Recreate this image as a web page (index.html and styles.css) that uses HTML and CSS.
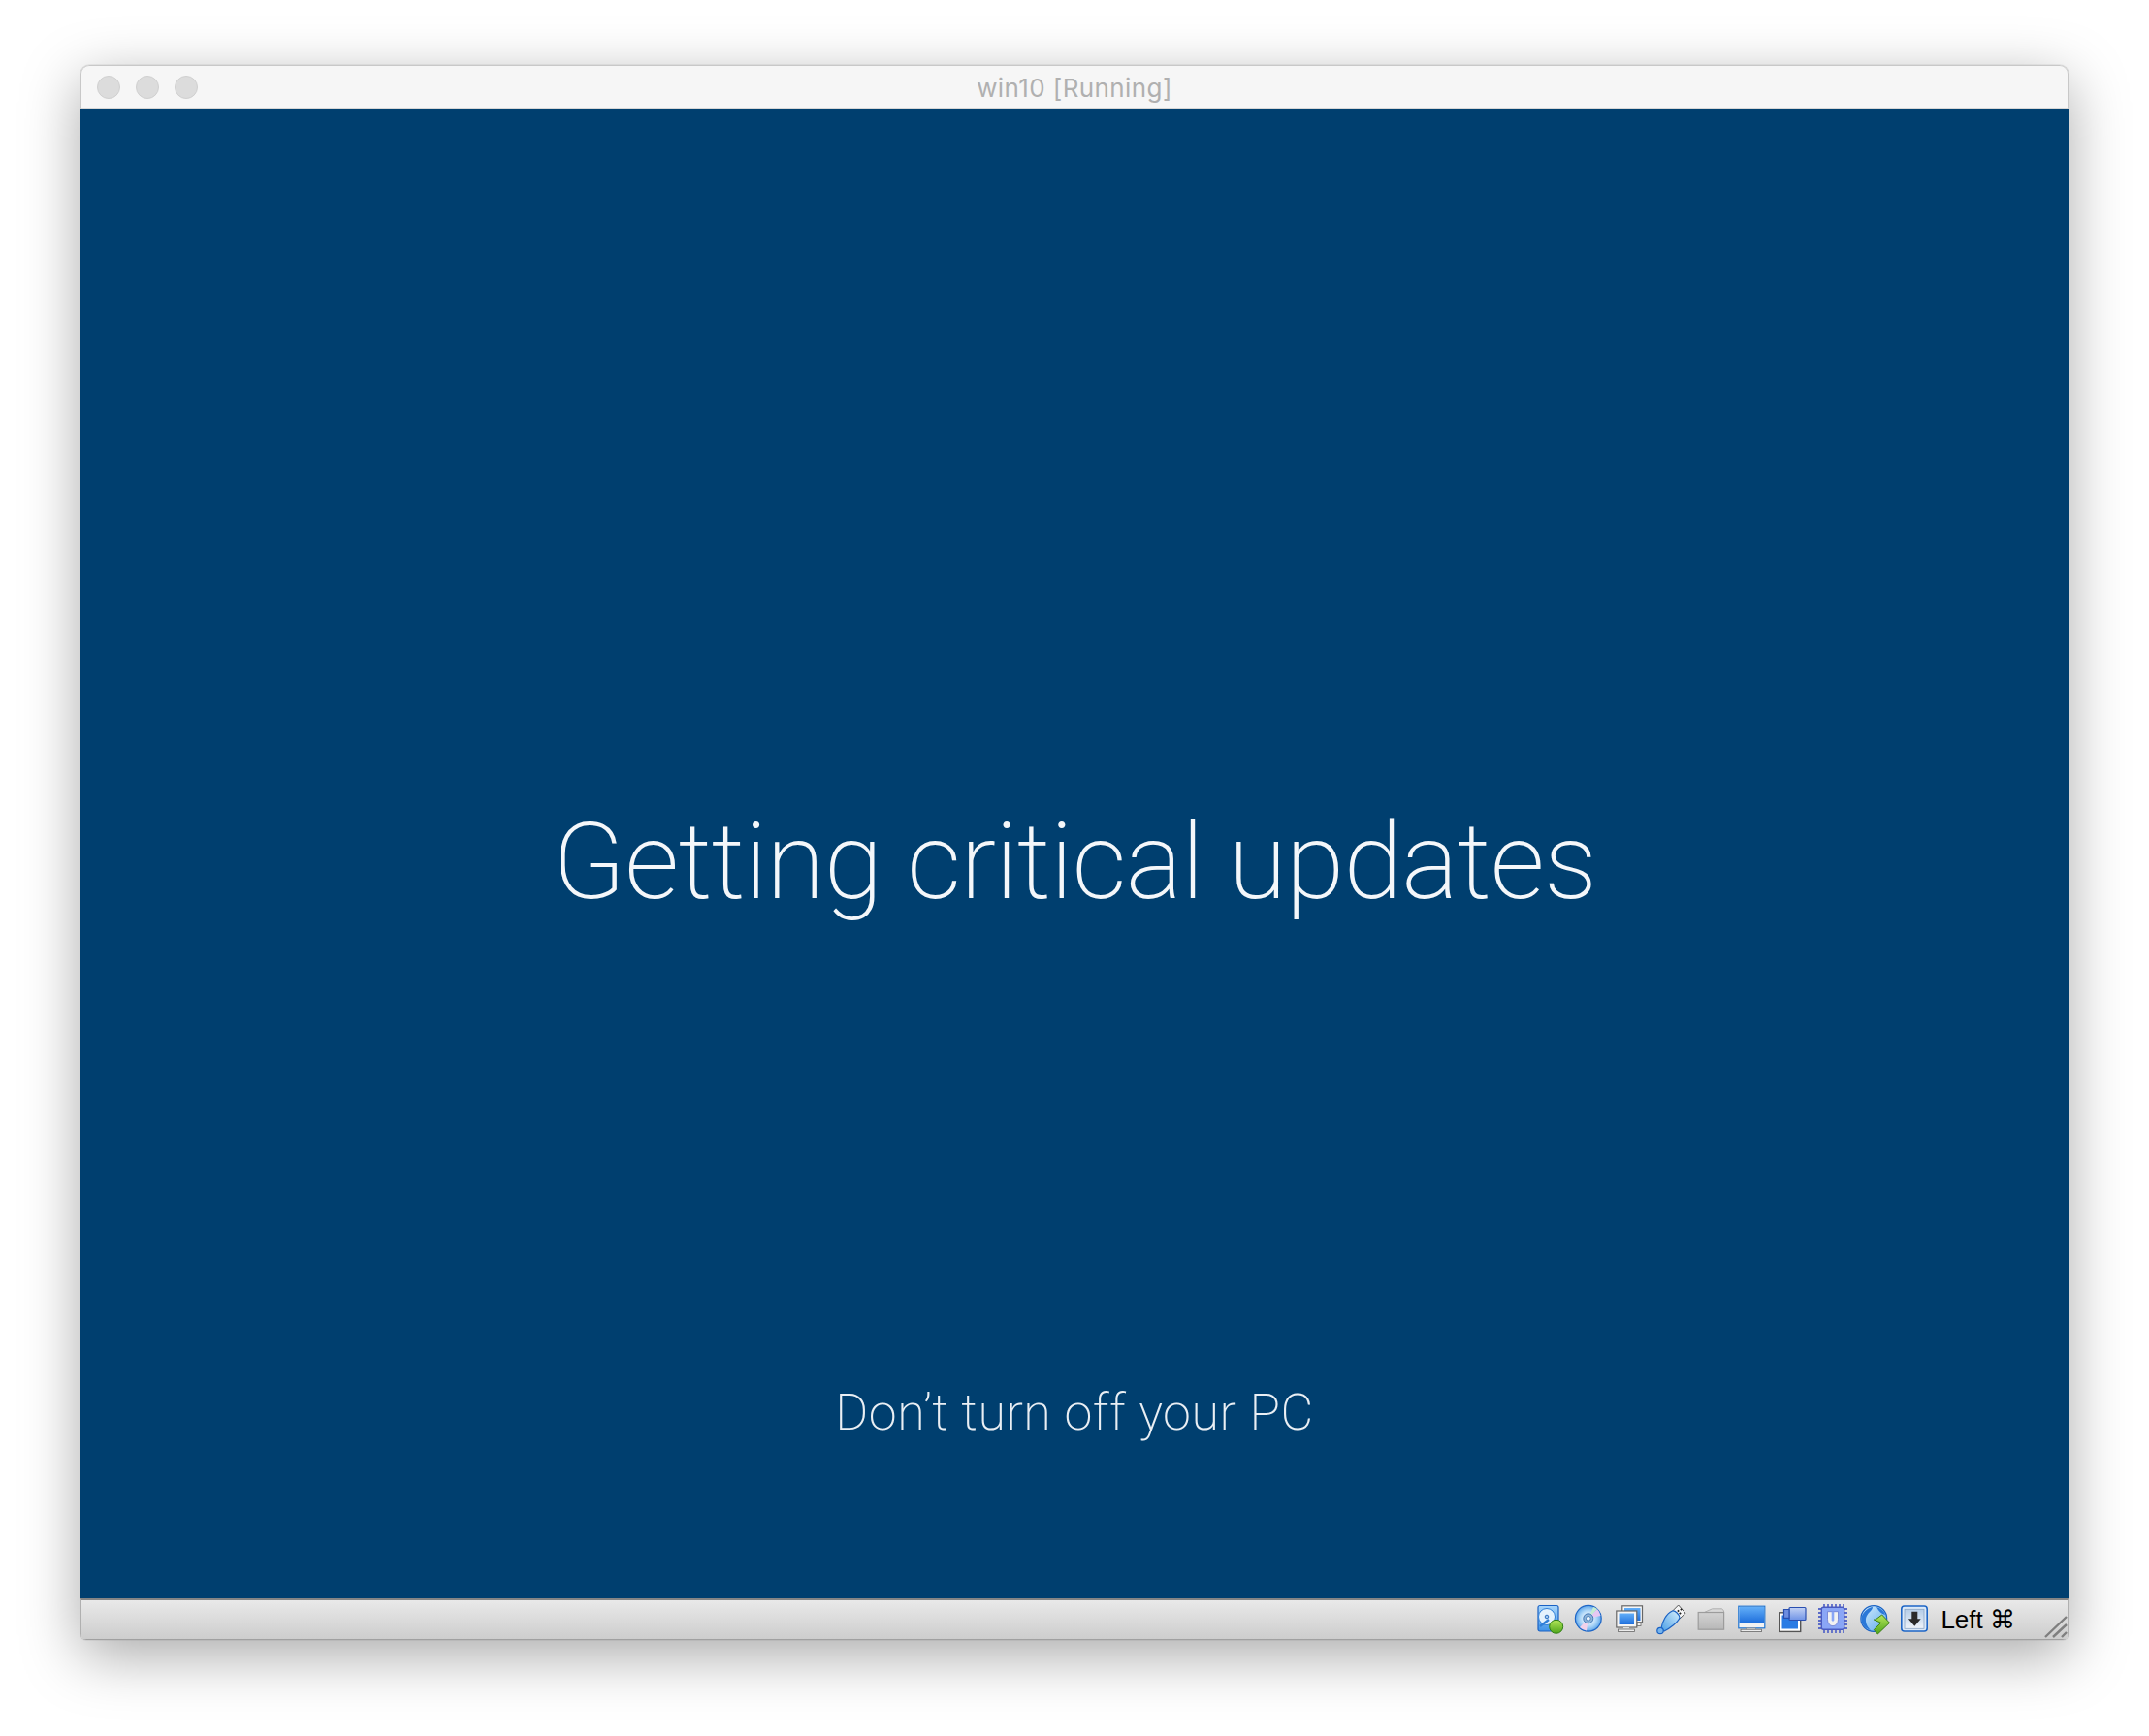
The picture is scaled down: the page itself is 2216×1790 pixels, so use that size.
FILE: index.html
```html
<!DOCTYPE html>
<html lang="en">
<head>
    <meta charset="UTF-8">
    <meta name="viewport" content="width=device-width, initial-scale=1.0">
    <title>win10 [Running]</title>
    <link rel="stylesheet" href="styles.css">
</head>
<body>
    <svg class="defs" width="0" height="0">
        <defs>
            <linearGradient id="blue" x1="0" y1="0" x2="0" y2="1">
                <stop offset="0" stop-color="#62aef8"/>
                <stop offset="1" stop-color="#1f6fdc"/>
            </linearGradient>
            <linearGradient id="sky" x1="0" y1="0" x2="0" y2="1">
                <stop offset="0" stop-color="#a9d6fb"/>
                <stop offset="1" stop-color="#3f93e8"/>
            </linearGradient>
            <linearGradient id="globe" x1="0" y1="0" x2="1" y2="1">
                <stop offset="0" stop-color="#d8effd"/>
                <stop offset="1" stop-color="#5aa8ee"/>
            </linearGradient>
            <linearGradient id="usb" x1="1" y1="0" x2="0" y2="1">
                <stop offset="0" stop-color="#d5eefc"/>
                <stop offset="1" stop-color="#4b9fe6"/>
            </linearGradient>
            <linearGradient id="grey" x1="0" y1="0" x2="0" y2="1">
                <stop offset="0" stop-color="#d2d2d2"/>
                <stop offset="1" stop-color="#b8b8b8"/>
            </linearGradient>
            <linearGradient id="lime" x1="0" y1="0" x2="0" y2="1">
                <stop offset="0" stop-color="#b4e65a"/>
                <stop offset="1" stop-color="#4fa51a"/>
            </linearGradient>
            <linearGradient id="plate" x1="0" y1="0" x2="0" y2="1">
                <stop offset="0" stop-color="#b5cde8"/>
                <stop offset="1" stop-color="#eef3f9"/>
            </linearGradient>
            <linearGradient id="cam" x1="0" y1="0" x2="0" y2="1">
                <stop offset="0" stop-color="#c3d2f4"/>
                <stop offset="1" stop-color="#6f93e6"/>
            </linearGradient>
            <radialGradient id="disc" cx="0.5" cy="0.5" r="0.5">
                <stop offset="0.25" stop-color="#eef7ff"/>
                <stop offset="0.65" stop-color="#a9d4f7"/>
                <stop offset="1" stop-color="#5ea6ea"/>
            </radialGradient>
        </defs>
    </svg>

    <div class="window">
        <div class="titlebar">
            <div class="lights">
                <span class="light"></span>
                <span class="light"></span>
                <span class="light"></span>
            </div>
            <div class="title">win10 [Running]</div>
        </div>

        <div class="screen">
            <h1 class="headline">Getting critical updates</h1>
            <p class="notice">Don’t turn off your PC</p>
        </div>

        <div class="statusbar">
            <div class="icons">
                <!-- hard disk -->
                <svg class="icon" viewBox="0 0 32 32">
                    <rect x="5" y="1.5" width="21" height="26.5" rx="2" fill="url(#sky)" stroke="#1a62c4" stroke-width="1.2"/>
                    <circle cx="14" cy="13" r="8.5" fill="#e4f2fd" stroke="#2f7fd8"/>
                    <circle cx="14" cy="13" r="1.8" fill="#9cc6ee" stroke="#2f6fc0"/>
                    <path d="M7 23 L16 16" stroke="#2f7fd8" stroke-width="2.4"/>
                    <circle cx="23.7" cy="23.3" r="7" fill="url(#lime)" stroke="#2f7f14"/>
                </svg>
                <!-- optical disc -->
                <svg class="icon" viewBox="0 0 32 32">
                    <circle cx="14.8" cy="14.8" r="13.4" fill="url(#disc)" stroke="#1e66c6" stroke-width="1.2"/>
                    <path d="M14.8 14.8 L24 5 A13 13 0 0 1 27.5 12 Z" fill="#e6c8f2"/>
                    <path d="M14.8 14.8 L6 24 A13 13 0 0 0 13 27.5 Z" fill="#f3d2ea"/>
                    <path d="M14.8 14.8 L20 3 A13 13 0 0 1 24 5 Z" fill="#c6ecd2"/>
                    <circle cx="14.8" cy="14.8" r="5" fill="#8fb4d8" stroke="#3f78b8"/>
                    <circle cx="14.8" cy="14.8" r="2.4" fill="#eef6fd" stroke="#3f78b8" stroke-width="0.8"/>
                </svg>
                <!-- two displays -->
                <svg class="icon" viewBox="0 0 32 32">
                    <rect x="7.8" y="1.8" width="20.7" height="17" fill="#f6f6f6" stroke="#666" stroke-width="1.2"/>
                    <rect x="10" y="4" width="16.5" height="13" fill="url(#blue)"/>
                    <rect x="23" y="19" width="4" height="3.5" fill="#eee" stroke="#666" stroke-width="0.8"/>
                    <rect x="1.8" y="7" width="21" height="17" fill="#f4f4f4" stroke="#666" stroke-width="1.2"/>
                    <rect x="4.5" y="9.5" width="15.5" height="11.5" fill="url(#blue)"/>
                    <rect x="9" y="24" width="6" height="2.5" fill="#ddd"/>
                    <rect x="3.5" y="26" width="17" height="2.5" fill="#ececec" stroke="#666" stroke-width="0.8"/>
                </svg>
                <!-- usb stick -->
                <svg class="icon" viewBox="0 0 32 32">
                    <path d="M17 7.7 L23.7 1 L31 9.3 L24 16 Z" fill="#f4f4f4" stroke="#555" stroke-width="1"/>
                    <rect x="22.6" y="6" width="1.8" height="1.8" fill="#222" transform="rotate(45 23.5 6.9)"/>
                    <rect x="25.6" y="4.5" width="1.8" height="1.8" fill="#222" transform="rotate(45 26.5 5.4)"/>
                    <rect x="24.5" y="8.7" width="1.8" height="1.8" fill="#222" transform="rotate(45 25.4 9.6)"/>
                    <path d="M6 25 C7 18 11 10 17.5 7 C20 6 25 11 25 14 C23 19 15 25 9 28 Z" fill="url(#usb)" stroke="#1a62c4" stroke-width="1.2"/>
                    <circle cx="5" cy="27.5" r="3.2" fill="#76b4ec" stroke="#1a62c4" stroke-width="1.2"/>
                </svg>
                <!-- shared folder -->
                <svg class="icon" viewBox="0 0 32 32">
                    <path d="M8.7 8.3 L16.7 4.8 H26.7 L28.5 7 V10 H8.7 Z" fill="#d8d8d8" stroke="#b0b0b0" stroke-width="1"/>
                    <rect x="2.2" y="8.5" width="26.4" height="17.7" fill="url(#grey)" stroke="#9c9c9c" stroke-width="1.2"/>
                </svg>
                <!-- display -->
                <svg class="icon" viewBox="0 0 32 32">
                    <rect x="1.8" y="2.2" width="27" height="22.6" fill="#f2f2f2" stroke="#2176d2" stroke-width="1.2"/>
                    <rect x="2.5" y="3" width="25.6" height="16" fill="url(#blue)"/>
                    <rect x="9.5" y="24.8" width="10" height="2" fill="#ddd" stroke="#888" stroke-width="0.6"/>
                    <rect x="4" y="26.2" width="21.5" height="2.4" fill="#ececec" stroke="#666" stroke-width="0.8"/>
                </svg>
                <!-- video capture -->
                <svg class="icon" viewBox="0 0 32 32">
                    <rect x="1.7" y="8.8" width="22" height="19.6" fill="#fff" stroke="#555" stroke-width="1.4"/>
                    <rect x="4.5" y="11.5" width="16.5" height="14" fill="#2a7be4"/>
                    <rect x="12" y="3.5" width="17" height="13" rx="1" fill="url(#cam)" stroke="#2a4fb0" stroke-width="1.2"/>
                    <path d="M6.5 5.5 H12 V14.3 H6.5 Z" fill="#6d8de0" stroke="#2a4fb0" stroke-width="1.2"/>
                </svg>
                <!-- chip -->
                <svg class="icon" viewBox="0 0 32 32">
                    <path d="M6 0 v30 M10 0 v30 M14 0 v30 M18 0 v30 M22 0 v30 M26 0 v30 M0 5 h30 M0 9 h30 M0 13 h30 M0 17 h30 M0 21 h30 M0 25 h30" stroke="#5a6bc8" stroke-width="1.8" stroke-dasharray="3 24"/>
                    <rect x="3.3" y="3.3" width="23.4" height="23" rx="2" fill="#8aa6f6" stroke="#4a5bc0" stroke-width="1.4"/>
                    <path d="M9.5 7.7 h11 v8 a5.5 7 0 0 1 -5.5 7 a5.5 7 0 0 1 -5.5 -7 Z" fill="#f2f2f2" stroke="#6a7ad0" stroke-width="0.8"/>
                    <path d="M13.7 7.7 h2.6 v8.5 l-1.3 2 l-1.3 -2 Z" fill="#8aa6f6"/>
                </svg>
                <!-- network -->
                <svg class="icon" viewBox="0 0 32 32">
                    <circle cx="15.3" cy="15" r="13.4" fill="url(#globe)" stroke="#1a62c4" stroke-width="1.2"/>
                    <path d="M2.5 13 C5 7 10 3.5 14 3 C14 7 8 9 7 15 C6.5 20 9 24 12 27 C5 25 1.5 19 2.5 13 Z" fill="#2a78d8"/>
                    <path d="M18 3 C22 4 26 7 27 11 C23 10 20 7 18 3 Z" fill="#2a78d8"/>
                    <path d="M23.7 11 L31.5 19.3 L19.3 31 L15.3 26.5 L22.7 19.3 L15.3 16 L17 16 Z" fill="url(#lime)" stroke="#3c7f16" stroke-width="1"/>
                </svg>
                <!-- guest additions -->
                <svg class="icon" viewBox="0 0 32 32">
                    <rect x="1.8" y="2" width="26.4" height="26" rx="3" fill="#dbe9f8" stroke="#1e66c6" stroke-width="1.6"/>
                    <rect x="5" y="5.3" width="20" height="20" fill="url(#plate)" stroke="#8aa4c4" stroke-width="0.8"/>
                    <path d="M12.3 7.7 h6 v7.6 h3.4 l-6.4 7.4 l-6.4 -7.4 h3.4 Z" fill="#2a2a2a"/>
                </svg>
            </div>
            <div class="hostkey">Left ⌘</div>
            <svg class="grip" viewBox="0 0 24 24">
                <path d="M1 22 L23 1 M9 22 L23 9 M18 22 L23 17" stroke="#7f7f7f" stroke-width="2.4" fill="none"/>
            </svg>
        </div>
    </div>
</body>
</html>
```

FILE: styles.css
```css
* {
    margin: 0;
    padding: 0;
    box-sizing: border-box;
}
html, body {
    height: 100%;
}
body {
    background-color: #fff;
    padding: 67px 83px 99px 83px;
    overflow: hidden;
}
.defs {
    position: absolute;
}
.window {
    display: flex;
    flex-direction: column;
    height: 100%;
    border-radius: 9px 9px 6px 6px;
    overflow: hidden;
    box-shadow: 0 16px 60px rgba(0, 0, 0, 0.34), 0 0 1px rgba(0, 0, 0, 0.5);
}
.titlebar {
    position: relative;
    flex: 0 0 45px;
    display: flex;
    align-items: center;
    justify-content: center;
    padding-top: 1px;
    background-color: #f6f6f6;
    border: 1px solid #c8c8c8;
    border-bottom: 1px solid #d6d6d6;
    border-radius: 9px 9px 0 0;
}
.lights {
    position: absolute;
    left: 16px;
    top: 10px;
    display: flex;
    gap: 16px;
}
.light {
    width: 24px;
    height: 24px;
    border-radius: 50%;
    background-color: #dcdcdc;
    border: 1px solid #d0d0d0;
}
.title {
    font-family: Inter, sans-serif;
    font-size: 26px;
    letter-spacing: 0.4px;
    color: #b0b0b0;
}
.screen {
    flex: 1;
    display: flex;
    flex-direction: column;
    align-items: center;
    background-color: #003f6f;
    color: #f4f7fa;
}
.headline {
    margin-top: 702px;
    font-family: Roboto, sans-serif;
    font-size: 110px;
    font-weight: 200;
    letter-spacing: -0.9px;
    line-height: 150px;
}
.notice {
    margin-top: 458px;
    font-family: Roboto, sans-serif;
    font-size: 52px;
    font-weight: 200;
    letter-spacing: 0.5px;
    line-height: 70px;
    color: #eaeff4;
}
.statusbar {
    position: relative;
    flex: 0 0 43px;
    display: flex;
    align-items: center;
    justify-content: flex-end;
    padding-right: 54px;
    background: linear-gradient(#e9e9e9, #cdcdcd);
    border-top: 2px solid #858585;
    border-bottom: 1px solid #a0a0a0;
    border-left: 1px solid #b0b0b0;
    border-right: 1px solid #b0b0b0;
}
.icons {
    display: flex;
    gap: 10px;
    margin-right: 10px;
}
.icon {
    width: 32px;
    height: 32px;
    display: block;
}
.hostkey {
    font-family: "Liberation Sans", sans-serif;
    font-size: 26px;
    color: #000;
}
.grip {
    position: absolute;
    right: 0;
    bottom: 0;
    width: 24px;
    height: 24px;
}
```
